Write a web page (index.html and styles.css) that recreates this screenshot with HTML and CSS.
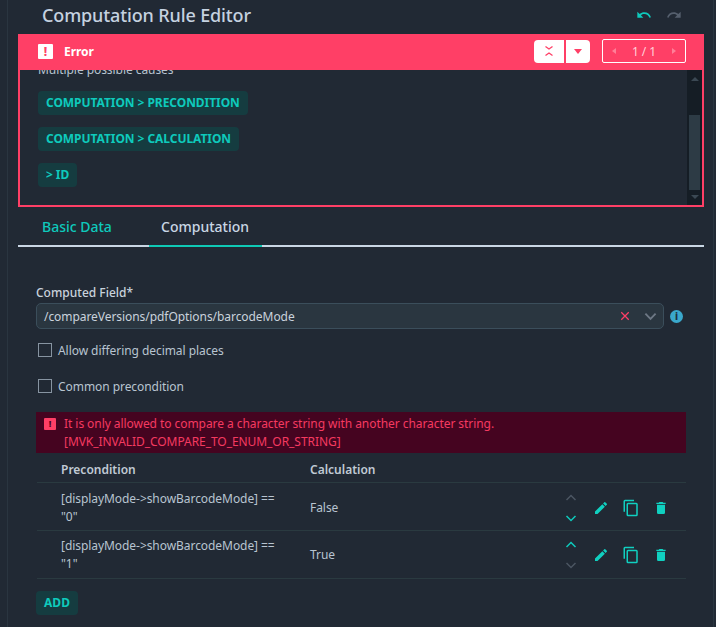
FILE: index.html
```html
<!DOCTYPE html>
<html lang="en">
<head>
<meta charset="utf-8">
<title>Computation Rule Editor</title>
<link rel="stylesheet" href="styles.css">
</head>
<body>
<div class="shell">
  <div class="panel">
    <header class="title-row">
      <h1 class="title">Computation Rule Editor</h1>
      <div class="history">
        <svg class="hist-icon teal" viewBox="0 0 24 24"><path d="M12.5 8c-2.65 0-5.05.99-6.9 2.6L2 7v9h9l-3.62-3.62c1.39-1.16 3.16-1.88 5.12-1.88 3.54 0 6.55 2.31 7.6 5.5l2.37-.78C21.08 11.03 17.15 8 12.5 8z"/></svg>
        <svg class="hist-icon grey" viewBox="0 0 24 24"><path d="M18.4 10.6C16.55 8.99 14.15 8 11.5 8c-4.65 0-8.58 3.03-9.96 7.22L3.9 16c1.05-3.19 4.05-5.5 7.6-5.5 1.95 0 3.73.72 5.12 1.88L13 16h9V7l-3.6 3.6z"/></svg>
      </div>
    </header>

    <section class="error-box">
      <div class="error-head">
        <span class="error-mark">!</span>
        <strong class="error-title">Error</strong>
        <div class="btn-group">
          <span class="btn-white btn-collapse">
            <svg viewBox="0 0 12 12" class="collapse-icon"><path d="M2.5 1.500l3.500 2.500 3.500-2.500M2.500 10.500l3.500-2.500 3.500 2.500"/></svg>
          </span>
          <span class="btn-white btn-drop"><span class="tri-down"></span></span>
        </div>
        <div class="pager">
          <span class="tri-left"></span>
          <span class="pager-text">1 / 1</span>
          <span class="tri-right"></span>
        </div>
      </div>
      <div class="error-body">
        <div class="error-scroll">
          <p class="causes">Multiple possible causes</p>
          <span class="chip">COMPUTATION &gt; PRECONDITION</span>
          <span class="chip">COMPUTATION &gt; CALCULATION</span>
          <span class="chip">&gt; ID</span>
        </div>
        <div class="scrollbar">
          <span class="sb-up"></span>
          <span class="sb-track"><span class="sb-thumb"></span></span>
          <span class="sb-down"></span>
        </div>
      </div>
    </section>

    <nav class="tabs">
      <span class="tab">Basic Data</span>
      <span class="tab tab-active">Computation</span>
    </nav>

    <div class="form">
      <label class="field-label">Computed Field*</label>
      <div class="field-row">
        <div class="select">
          <span class="select-value">/compareVersions/pdfOptions/barcodeMode</span>
          <svg class="clear-icon" viewBox="0 0 12 12"><path d="M1.5 1.5l9 9M10.5 1.5l-9 9"/></svg>
          <svg class="chev-icon" viewBox="0 0 14 9"><path d="M1.5 1.5L7 7l5.500-5.500"/></svg>
        </div>
        <span class="info">i</span>
      </div>

      <label class="check"><span class="box"></span>Allow differing decimal places</label>
      <label class="check"><span class="box"></span>Common precondition</label>

      <div class="alert">
        <span class="alert-mark">!</span>
        <p class="alert-text">It is only allowed to compare a character string with another character string.<br>[MVK_INVALID_COMPARE_TO_ENUM_OR_STRING]</p>
      </div>

      <div class="table">
        <div class="row head">
          <span class="c-pre">Precondition</span>
          <span class="c-calc">Calculation</span>
        </div>
        <div class="row row-first">
          <span class="c-pre">[displayMode-&gt;showBarcodeMode] == "0"</span>
          <span class="c-calc">False</span>
          <div class="order">
            <svg class="arrow off" viewBox="0 0 12 7"><path d="M1.500 6L6 1.500 10.500 6"/></svg>
            <svg class="arrow on" viewBox="0 0 12 7"><path d="M1.500 1L6 5.500 10.500 1"/></svg>
          </div>
          <svg class="act edit" viewBox="0 0 24 24"><path d="M3 17.250V21h3.750L17.810 9.940l-3.750-3.750L3 17.250zM20.710 7.040a1 1 0 0 0 0-1.410l-2.340-2.340a1 1 0 0 0-1.410 0l-1.830 1.830 3.750 3.750 1.830-1.830z"/></svg>
          <svg class="act copy" viewBox="0 0 24 24"><path d="M16 1H4a2 2 0 0 0-2 2v14h2V3h12V1zm3 4H8a2 2 0 0 0-2 2v14a2 2 0 0 0 2 2h11a2 2 0 0 0 2-2V7a2 2 0 0 0-2-2zm0 16H8V7h11v14z"/></svg>
          <svg class="act" viewBox="0 0 24 24"><path d="M6 19a2 2 0 0 0 2 2h8a2 2 0 0 0 2-2V7H6v12zM19 4h-3.500l-1-1h-5l-1 1H5v2h14V4z"/></svg>
        </div>
        <div class="row">
          <span class="c-pre">[displayMode-&gt;showBarcodeMode] == "1"</span>
          <span class="c-calc">True</span>
          <div class="order">
            <svg class="arrow on" viewBox="0 0 12 7"><path d="M1.500 6L6 1.500 10.500 6"/></svg>
            <svg class="arrow off" viewBox="0 0 12 7"><path d="M1.500 1L6 5.500 10.500 1"/></svg>
          </div>
          <svg class="act edit" viewBox="0 0 24 24"><path d="M3 17.250V21h3.750L17.810 9.940l-3.750-3.750L3 17.250zM20.710 7.040a1 1 0 0 0 0-1.410l-2.340-2.340a1 1 0 0 0-1.410 0l-1.830 1.830 3.750 3.750 1.830-1.830z"/></svg>
          <svg class="act copy" viewBox="0 0 24 24"><path d="M16 1H4a2 2 0 0 0-2 2v14h2V3h12V1zm3 4H8a2 2 0 0 0-2 2v14a2 2 0 0 0 2 2h11a2 2 0 0 0 2-2V7a2 2 0 0 0-2-2zm0 16H8V7h11v14z"/></svg>
          <svg class="act" viewBox="0 0 24 24"><path d="M6 19a2 2 0 0 0 2 2h8a2 2 0 0 0 2-2V7H6v12zM19 4h-3.500l-1-1h-5l-1 1H5v2h14V4z"/></svg>
        </div>
      </div>

      <button class="add" type="button">ADD</button>
    </div>
  </div>
</div>
</body>
</html>
```
FILE: styles.css
```css
* { box-sizing: border-box; }
html, body { margin: 0; height: 100%; }
body {
  background: #212934;
  color: #c9d2dc;
  font-family: "Noto Sans", sans-serif;
  font-size: 12px;
  letter-spacing: -0.06px;
  overflow: hidden;
}
.shell {
  margin: 0 2px 0 7px;
  height: 627px;
  border-left: 1px solid #2a3540;
  border-right: 1px solid #2a3540;
  padding: 0 8px 0 10px;
}
.panel { width: 686px; }

.title-row {
  height: 34px;
  display: flex;
  align-items: center;
  padding: 0 22px 4px 24px;
}
.title { margin: 0; flex: 1; font-size: 18px; font-weight: 500; color: #c5d2e0; line-height: 30px; letter-spacing: -0.13px; }
.history { display: flex; gap: 14px; }
.hist-icon { width: 16px; height: 16px; }
.hist-icon.teal { fill: #0ecabc; }
.hist-icon.grey { fill: #555f6d; }

.error-box {
  height: 173px;
  border: 2px solid #ff3f66;
  border-top: 0;
  display: flex;
  flex-direction: column;
}
.error-head {
  height: 36px;
  margin: 0 -2px;
  background: #ff3f66;
  display: flex;
  align-items: center;
  padding: 0 18px 2px 20px;
  color: #fff;
}
.error-mark {
  width: 15px;
  height: 15px;
  background: #fff;
  color: #ff3f66;
  border-radius: 1px;
  font-size: 12px;
  font-weight: 800;
  line-height: 15px;
  text-align: center;
  margin-right: 11px;
}
.error-title { flex: 1; font-size: 12px; font-weight: 700; }
.btn-group { display: flex; gap: 2px; margin-right: 12px; }
.btn-white {
  height: 23px;
  background: #fff;
  display: flex;
  align-items: center;
  justify-content: center;
}
.btn-collapse { width: 30px; border-radius: 4px 0 0 4px; }
.btn-drop { width: 24px; border-radius: 0 4px 4px 0; }
.collapse-icon { width: 12px; height: 12px; fill: none; stroke: #ff3f66; stroke-width: 1.300; }
.tri-down { width: 0; height: 0; border: 4px solid transparent; border-top: 5px solid #ff3f66; border-bottom: 0; }
.pager {
  width: 84px;
  height: 24px;
  border: 1px solid #fff;
  border-radius: 2px;
  display: flex;
  align-items: center;
  justify-content: space-between;
  padding: 0 9px;
}
.pager-text { color: #ffd0da; font-size: 12px; }
.tri-left { border: 3px solid transparent; border-right: 4px solid #ff7f98; border-left: 0; }
.tri-right { border: 3px solid transparent; border-left: 4px solid #ff7f98; border-right: 0; }

.error-body { flex: 1; min-height: 0; display: flex; overflow: hidden; }
.error-scroll { flex: 1; padding-left: 18px; margin-top: -9px; display: flex; flex-direction: column; align-items: flex-start; }
.causes { margin: 0 0 12px; height: 18px; line-height: 18px; color: #b8c4d0; }
.chip {
  height: 24px;
  line-height: 23px;
  margin-bottom: 12px;
  padding: 0 8px;
  border-radius: 4px;
  background: #153c40;
  color: #0ecabc;
  font-weight: 700;
  font-size: 12px;
}
.scrollbar { width: 15px; background: #151d25; display: flex; flex-direction: column; align-items: center; }
.sb-up { margin-top: 7px; border: 4px solid transparent; border-bottom: 4px solid #3b4853; border-top: 0; }
.sb-down { margin-bottom: 6px; border: 4px solid transparent; border-top: 4px solid #3b4853; border-bottom: 0; }
.sb-track { flex: 1; width: 100%; padding: 34px 2px 5px; display: flex; }
.sb-thumb { flex: 1; background: #2d3b45; }

.tabs {
  display: flex;
  height: 40px;
  border-bottom: 2px solid #c9d6e4;
  letter-spacing: 0;
}
.tab {
  width: 131px;
  padding: 9px 0 0 24px;
  font-size: 14px;
  font-weight: 500;
  line-height: 22px;
  color: #0ecabc;
  height: 40px;
}
.tab-active {
  width: 113px;
  padding-left: 12px;
  color: #c9d6e4;
  border-bottom: 2px solid #0fc9b5;
}

.form { padding: 37px 0 0 18px; }
.field-label { display: block; height: 17px; line-height: 17px; color: #c9d2dc; font-weight: 500; letter-spacing: 0; }
.field-row { display: flex; align-items: center; margin-top: 2px; }
.select {
  width: 628px;
  height: 26px;
  background: #2a3640;
  border: 1px solid #3b4e5b;
  border-radius: 5px;
  display: flex;
  align-items: center;
  padding: 0 6px 0 7px;
}
.select-value { flex: 1; color: #c9d2dc; font-size: 12px; }
.clear-icon { width: 10px; height: 10px; fill: none; stroke: #ff3f66; stroke-width: 1.500; margin-right: 14px; }
.chev-icon { width: 13px; height: 9px; fill: none; stroke: #6d7885; stroke-width: 2; }
.info {
  width: 13px;
  height: 13px;
  margin-left: 6px;
  border-radius: 50%;
  background: #3aa8cc;
  color: #1c3140;
  font-size: 10px;
  font-weight: 800;
  line-height: 13px;
  text-align: center;
}
.check { display: flex; align-items: center; height: 16px; color: #b8c4d0; margin: 13px 0 0 2px; }
.check + .check { margin-top: 20px; }
.box { width: 14px; height: 14px; border: 1px solid #8794a1; margin-right: 6px; }

.alert {
  margin-top: 18px;
  height: 41px;
  width: 650px;
  background: #450420;
  padding: 3px 0 0 8px;
  display: flex;
  color: #f53a60;
}
.alert-mark {
  width: 12px;
  height: 12px;
  margin-top: 3px;
  margin-right: 8px;
  background: #ff3f66;
  color: #450420;
  font-size: 9px;
  font-weight: 800;
  line-height: 12px;
  text-align: center;
  border-radius: 1px;
}
.alert-text { margin: 0; line-height: 18px; }

.table { width: 650px; padding-left: 1px; }
.row {
  display: flex;
  align-items: center;
  height: 48px;
  border-bottom: 1px solid #2a3a40;
  padding-left: 24px;
  color: #b8c4d0;
}
.row.head { height: 30px; padding-top: 4px; font-weight: 600; color: #c0cad4; letter-spacing: 0; }
.row.row-first { padding-top: 2px; }
.c-pre { width: 249px; padding-right: 20px; line-height: 18px; }
.c-calc { width: 254px; }
.order { display: flex; flex-direction: column; align-items: center; gap: 14px; width: 14px; margin-right: 13px; }
.arrow { width: 12px; height: 7px; fill: none; stroke-width: 1.500; }
.arrow.on { stroke: #0ecabc; }
.arrow.off { stroke: #4b5562; }
.act { width: 16px; height: 16px; fill: #10d0c0; margin-right: 14px; flex: none; }
.act.edit { margin-left: 2px; }
.act.copy { width: 18px; height: 18px; margin: 0 13px 0 -1px; }

.add {
  display: block;
  margin-top: 12px;
  width: 42px;
  height: 24px;
  border: 0;
  padding: 0 0 1px;
  border-radius: 4px;
  background: #153c40;
  color: #0ecabc;
  font: 700 12px "Noto Sans", sans-serif;
}
```
